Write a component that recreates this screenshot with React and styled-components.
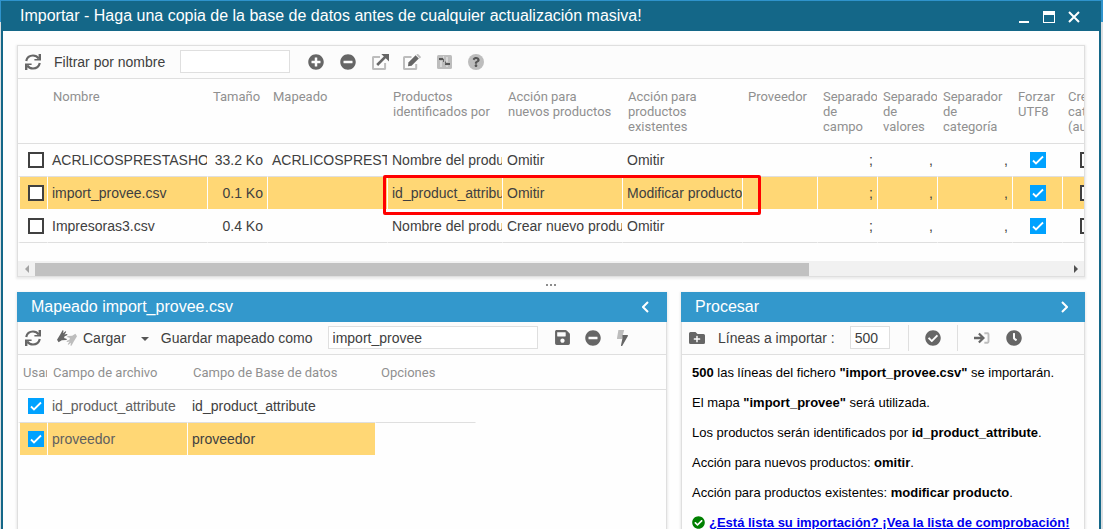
import React, { useState } from 'react';
import styled, { createGlobalStyle, css } from 'styled-components';
import {
    FaPlusCircle,
    FaMinusCircle,
    FaQuestion,
    FaCheckCircle,
    FaClock,
    FaFolderPlus,
    FaSave,
} from 'react-icons/fa';

const fileColumns = [
    { label: '', width: 30 },
    { label: 'Nombre', width: 160 },
    { label: 'Tamaño', width: 60 },
    { label: 'Mapeado', width: 120 },
    { label: 'Productos identificados por', width: 115 },
    { label: 'Acción para nuevos productos', width: 120 },
    { label: 'Acción para productos existentes', width: 120 },
    { label: 'Proveedor', width: 75 },
    { label: 'Separador de campo', width: 60 },
    { label: 'Separador de valores', width: 60 },
    { label: 'Separador de categoría', width: 75 },
    { label: 'Forzar UTF8', width: 50 },
    { label: 'Crear categorías (auto)', width: 50 },
];

const files = [
    {
        name: 'ACRLICOSPRESTASHOP',
        size: '33.2 Ko',
        map: 'ACRLICOSPRESTA',
        idBy: 'Nombre del producto',
        onNew: 'Omitir',
        onExisting: 'Omitir',
    },
    {
        name: 'import_provee.csv',
        size: '0.1 Ko',
        map: '',
        idBy: 'id_product_attribute',
        onNew: 'Omitir',
        onExisting: 'Modificar producto',
    },
    {
        name: 'Impresoras3.csv',
        size: '0.4 Ko',
        map: '',
        idBy: 'Nombre del producto',
        onNew: 'Crear nuevo producto',
        onExisting: 'Omitir',
    },
];

const mapColumns = [
    { label: 'Usar', width: 30 },
    { label: 'Campo de archivo', width: 140 },
    { label: 'Campo de Base de datos', width: 188 },
    { label: 'Opciones', width: 100 },
];

const mappings = ['id_product_attribute', 'proveedor'];

export default function App() {
    const [selected, setSelected] = useState('import_provee.csv');
    const [mapName, setMapName] = useState('import_provee');
    const [lines, setLines] = useState('500');

    return (
        <Page>
            <GlobalStyle />
            <Window>
                <TitleBar>
                    <Title>Importar - Haga una copia de la base de datos antes de cualquier actualización masiva!</Title>
                    <WindowButtons />
                </TitleBar>
                <Content>
                    <Panel>
                        <Toolbar>
                            <IconButton aria-label="Refrescar">
                                <RefreshIcon />
                            </IconButton>
                            <FilterLabel htmlFor="filter">Filtrar por nombre</FilterLabel>
                            <TextInput id="filter" $width={110} />
                            <ButtonGroup>
                                <IconButton aria-label="Añadir">
                                    <FaPlusCircle size={16} />
                                </IconButton>
                                <IconButton aria-label="Eliminar">
                                    <FaMinusCircle size={16} />
                                </IconButton>
                                <IconButton aria-label="Abrir">
                                    <ExternalIcon />
                                </IconButton>
                                <IconButton aria-label="Editar">
                                    <EditIcon />
                                </IconButton>
                                <IconButton aria-label="Opciones">
                                    <SlidersIcon />
                                </IconButton>
                                <IconButton aria-label="Ayuda">
                                    <HelpIcon />
                                </IconButton>
                            </ButtonGroup>
                        </Toolbar>
                        <GridBox>
                            <Table $width={1095}>
                                <Columns columns={fileColumns} />
                                <thead>
                                    <tr>
                                        {fileColumns.map((col) => (
                                            <HeadCell key={col.label} $height={65}>
                                                {col.label}
                                            </HeadCell>
                                        ))}
                                    </tr>
                                </thead>
                                <tbody>
                                    {files.map((file) => (
                                        <Row
                                            key={file.name}
                                            $selected={file.name === selected}
                                            onClick={() => setSelected(file.name)}
                                        >
                                            <CheckCell>
                                                <Checkbox aria-label={file.name} />
                                            </CheckCell>
                                            <Cell>{file.name}</Cell>
                                            <Cell $align="right">{file.size}</Cell>
                                            <Cell>{file.map}</Cell>
                                            <Cell>{file.idBy}</Cell>
                                            <Cell>{file.onNew}</Cell>
                                            <Cell>{file.onExisting}</Cell>
                                            <Cell />
                                            <Cell $align="right">;</Cell>
                                            <Cell $align="right">,</Cell>
                                            <Cell $align="right">,</Cell>
                                            <CheckCell $align="center">
                                                <Checkbox aria-label="Forzar UTF8" defaultChecked />
                                            </CheckCell>
                                            <CheckCell $align="center">
                                                <Checkbox aria-label="Crear categorías" />
                                            </CheckCell>
                                        </Row>
                                    ))}
                                </tbody>
                            </Table>
                            <Highlight />
                        </GridBox>
                        <ScrollBar>
                            <ScrollArrow $left />
                            <ScrollTrack>
                                <ScrollThumb />
                            </ScrollTrack>
                            <ScrollArrow />
                        </ScrollBar>
                    </Panel>

                    <Splitter>
                        <Dot />
                        <Dot />
                        <Dot />
                    </Splitter>

                    <Bottom>
                        <Panel $open>
                            <PanelHeader>
                                <PanelTitle>Mapeado import_provee.csv</PanelTitle>
                                <Chevron $left />
                            </PanelHeader>
                            <Toolbar>
                                <IconButton aria-label="Refrescar">
                                    <RefreshIcon />
                                </IconButton>
                                <LoadButton>
                                    <HandsIcon />
                                    Cargar
                                    <Caret />
                                </LoadButton>
                                <SaveLabel htmlFor="map-name">Guardar mapeado como</SaveLabel>
                                <TextInput
                                    id="map-name"
                                    $width={210}
                                    value={mapName}
                                    onChange={(e) => setMapName(e.target.value)}
                                />
                                <ButtonGroup $tight>
                                    <IconButton aria-label="Guardar">
                                        <FaSave size={17} />
                                    </IconButton>
                                    <IconButton aria-label="Eliminar">
                                        <FaMinusCircle size={16} />
                                    </IconButton>
                                    <IconButton aria-label="Automático">
                                        <BoltIcon />
                                    </IconButton>
                                </ButtonGroup>
                            </Toolbar>
                            <HeadLine>
                                <Table $width={458}>
                                    <Columns columns={mapColumns} />
                                    <thead>
                                        <tr>
                                            {mapColumns.map((col) => (
                                                <HeadCell key={col.label} $height={35}>
                                                    {col.label}
                                                </HeadCell>
                                            ))}
                                        </tr>
                                    </thead>
                                    <tbody>
                                        {mappings.map((field) => (
                                            <Row key={field} $selected={field === 'proveedor'}>
                                                <CheckCell>
                                                    <Checkbox aria-label={field} defaultChecked />
                                                </CheckCell>
                                                <Cell $muted>{field}</Cell>
                                                <Cell>{field}</Cell>
                                                <Cell />
                                            </Row>
                                        ))}
                                    </tbody>
                                </Table>
                            </HeadLine>
                        </Panel>

                        <Panel $open>
                            <PanelHeader>
                                <PanelTitle>Procesar</PanelTitle>
                                <Chevron />
                            </PanelHeader>
                            <Toolbar>
                                <IconButton aria-label="Nueva carpeta">
                                    <FaFolderPlus size={16} />
                                </IconButton>
                                <LinesLabel htmlFor="lines">Líneas a importar :</LinesLabel>
                                <TextInput
                                    id="lines"
                                    $width={40}
                                    value={lines}
                                    onChange={(e) => setLines(e.target.value)}
                                />
                                <Separator />
                                <IconButton aria-label="Comprobar">
                                    <FaCheckCircle size={16} />
                                </IconButton>
                                <Separator $tight />
                                <IconButton aria-label="Importar">
                                    <ImportIcon />
                                </IconButton>
                                <IconButton aria-label="Programar">
                                    <FaClock size={16} />
                                </IconButton>
                            </Toolbar>
                            <Summary>
                                <p>
                                    <b>500</b> las líneas del fichero <b>"import_provee.csv"</b> se importarán.
                                </p>
                                <p>
                                    El mapa <b>"import_provee"</b> será utilizada.
                                </p>
                                <p>
                                    Los productos serán identificados por <b>id_product_attribute</b>.
                                </p>
                                <p>
                                    Acción para nuevos productos: <b>omitir</b>.
                                </p>
                                <p>
                                    Acción para productos existentes: <b>modificar producto</b>.
                                </p>
                                <CheckLine>
                                    <FaCheckCircle size={13} />
                                    <a href="#checklist">¿Está lista su importación? ¡Vea la lista de comprobación!</a>
                                </CheckLine>
                            </Summary>
                        </Panel>
                    </Bottom>
                </Content>
            </Window>
        </Page>
    );
}

function Columns({ columns }) {
    return (
        <colgroup>
            {columns.map((col) => (
                <col key={col.label} style={{ width: col.width }} />
            ))}
        </colgroup>
    );
}

function WindowButtons() {
    return (
        <WindowControls>
            <WindowButton aria-label="Minimizar">
                <svg width="12" height="12" viewBox="0 0 12 12">
                    <path d="M1 10h10v2H1z" fill="#fff" />
                </svg>
            </WindowButton>
            <WindowButton aria-label="Maximizar">
                <svg width="12" height="12" viewBox="0 0 12 12">
                    <path d="M0 0h12v12H0zM1 4v7h10V4z" fill="#fff" fillRule="evenodd" />
                </svg>
            </WindowButton>
            <WindowButton aria-label="Cerrar">
                <svg width="12" height="12" viewBox="0 0 12 12">
                    <path d="M1 1l10 10M11 1L1 11" stroke="#fff" strokeWidth="2" />
                </svg>
            </WindowButton>
        </WindowControls>
    );
}

function RefreshIcon() {
    return (
        <svg width="16" height="16" viewBox="0 0 16 16" fill="none" stroke="#666" strokeWidth="2.2">
            <path d="M1.2 7C2 3.6 4.8 1.5 8 1.5c2.4 0 4.4 1 5.8 3" />
            <path d="M14.8 9c-.8 3.4-3.6 5.5-6.8 5.5-2.4 0-4.4-1-5.8-3" />
            <path d="M16 0v6.6H9.4V5h4.2V0zM0 16V9.4h6.600V11H2.400v5z" fill="#666" stroke="none" />
        </svg>
    );
}

function ExternalIcon() {
    return (
        <svg width="17" height="16" viewBox="0 0 17 16" fill="none">
            <path d="M8 3H1.5A.6.6 0 0 0 1 3.4v11c0 .3.2.6.5.6h11c.3 0 .6-.3.6-.6V9" stroke="#bdbdbd" strokeWidth="2" />
            <path d="M5.2 11L14 2.2" stroke="#666" strokeWidth="2.6" />
            <path d="M9.3 0H17v7.6l-2-2L11.3 2z" fill="#666" />
        </svg>
    );
}

function EditIcon() {
    return (
        <svg width="18" height="16" viewBox="0 0 18 16" fill="none">
            <path d="M8.5 3H1.6a.6.6 0 0 0-.6.6v10.8c0 .3.3.6.6.6h11c.3 0 .6-.3.6-.6V10" stroke="#bdbdbd" strokeWidth="2" />
            <path d="M5 12.2l.4-3.8 7.2-7.1 3.2 3.2-7.2 7.2z" fill="#666" />
            <path d="M13.3.8l.8-.6c.4-.3.9-.3 1.2 0l2.3 2.300c.4.4.4.9 0 1.200l-.9.7z" fill="#bdbdbd" />
        </svg>
    );
}

function SlidersIcon() {
    return (
        <svg width="15" height="14" viewBox="0 0 15 14">
            <rect width="15" height="14" rx="1.5" fill="#bdbdbd" />
            <path d="M4 6v6M6 2h1M10 2v5M10 10.500v1.500" fill="none" stroke="#f2f2f2" />
            <path d="M2 4h4M8 9h5" fill="none" stroke="#555" strokeWidth="2" />
            <path d="M6.500 4v3M8.500 6.500V9" fill="none" stroke="#666" />
        </svg>
    );
}

function HelpIcon() {
    return (
        <svg width="16" height="16" viewBox="0 0 16 16">
            <circle cx="8" cy="8" r="8" fill="#bdbdbd" />
            <FaQuestion x={3} y={3} size={10} color="#555" />
        </svg>
    );
}

// two signing hands, the light one is the dark one turned around
function HandsIcon() {
    const hand =
        'M0 9.800L3.200 4.600 5.400.500c.4-.6 1.300-.2 1.100.5L6 3.200 8.200 1.400c.6-.4 1.300.300.8.9L7.400 4.600l2.300-.5c.8-.1 1 .9.300 1.200L7.800 6.200c-.8.600-.9 1.600-.2 2.100l1.700.4c.8.200.7 1.300-.1 1.300l-4.400.3-3.200 2z';

    return (
        <svg width="20" height="16" viewBox="0 0 20 16">
            <path d={hand} fill="#666" />
            <path d={hand} fill="#bdbdbd" transform="rotate(180 10 8)" />
        </svg>
    );
}

function BoltIcon() {
    return (
        <svg width="11" height="16" viewBox="0 0 11 16">
            <path d="M1.4 0h5.8L5.9 4.8 4.9 9H.6A.6.6 0 0 1 0 8.3z" fill="#bdbdbd" />
            <path d="M5.4 5h5c.5 0 .7.5.5.9L5.3 15.7c-.4.6-1.5.2-1.3-.4L5.3 9z" fill="#666" />
        </svg>
    );
}

function ImportIcon() {
    return (
        <svg width="16" height="14" viewBox="0 0 17 14" fill="none">
            <path d="M11 2h3.500c.5 0 .9.4.9.9v8.200c0 .5-.4.9-.9.9H11" stroke="#bdbdbd" strokeWidth="2" />
            <path d="M0 7h9.5M5.2 2.200L10 7l-4.800 4.800" stroke="#666" strokeWidth="2.400" />
        </svg>
    );
}

function Caret() {
    return (
        <CaretSvg width="8" height="4" viewBox="0 0 8 4">
            <path d="M0 0h8L4 4z" fill="#555" />
        </CaretSvg>
    );
}

function Chevron({ $left }) {
    return (
        <ChevronButton aria-label={$left ? 'Contraer' : 'Expandir'}>
            <svg width="8" height="12" viewBox="0 0 8 12" fill="none" stroke="#fff" strokeWidth="2">
                <path d={$left ? 'M6 1L1 6l5 5' : 'M2 1l5 5-5 5'} />
            </svg>
        </ChevronButton>
    );
}

function ScrollArrow({ $left }) {
    return (
        <ArrowButton aria-label={$left ? 'Desplazar a la izquierda' : 'Desplazar a la derecha'}>
            <svg width="4" height="8" viewBox="0 0 4 8">
                <path d={$left ? 'M4 0v8L0 4z' : 'M0 0v8l4-4z'} fill={$left ? '#a3a3a3' : '#505050'} />
            </svg>
        </ArrowButton>
    );
}

const GlobalStyle = createGlobalStyle`
    * {
        box-sizing: border-box;
    }

    body {
        margin: 0;
        font-family: 'Liberation Sans', Arial, sans-serif;
        font-size: 14px;
        color: #404040;
    }

    button {
        padding: 0;
        border: 0;
        background: none;
        font: inherit;
        color: inherit;
        cursor: pointer;
    }
`;

const Page = styled.div`
    height: 100vh;
    padding: 1px 2px 0 1px;
    overflow: hidden;
    background: linear-gradient(#2f93cc 22px, #dcdfe1 22px);
`;

const Window = styled.div`
    display: flex;
    flex-direction: column;
    height: 100%;
    border: solid #146788;
    border-width: 0 2px;
    background-color: #fefefe;
`;

const TitleBar = styled.div`
    flex: none;
    display: flex;
    justify-content: space-between;
    align-items: center;
    height: 30px;
    padding: 0 19px 0 17px;
    background-color: #146788;
    color: #fff;
`;

const Title = styled.h1`
    margin: 0;
    font-size: 16px;
    font-weight: normal;
    line-height: 30px;
`;

const WindowControls = styled.div`
    display: flex;
    gap: 13px;
    padding-top: 2px;
`;

const WindowButton = styled.button`
    display: flex;
`;

const Content = styled.div`
    flex: 1;
    min-height: 0;
    display: flex;
    flex-direction: column;
    padding: 14px 14px 0;
`;

const Panel = styled.section`
    min-width: 0;
    border: 1px solid #dfdfdf;
    background-color: #fefefe;
    box-shadow: 0 1px 2px 1px rgba(0, 0, 0, 0.08);
    ${(props) =>
        props.$open &&
        css`
            border-top: 0;
            border-bottom: 0;
        `}
`;

const PanelHeader = styled.header`
    display: flex;
    justify-content: space-between;
    align-items: center;
    height: 30px;
    margin: 0 -1px;
    padding: 0 17px 0 14px;
    background-color: #3398cc;
    color: #fff;
`;

const PanelTitle = styled.h2`
    margin: 0;
    font-size: 16px;
    font-weight: normal;
`;

const ChevronButton = styled.button`
    display: flex;
`;

const Toolbar = styled.div`
    display: flex;
    align-items: center;
    height: 33px;
    padding: 0 7px 1px;
    border-bottom: 1px solid #dfdfdf;
    background-color: #fcfcfc;
    white-space: nowrap;
`;

const IconButton = styled.button`
    flex: none;
    display: flex;
    justify-content: center;
    align-items: center;
    min-width: 16px;
    color: #666;

    & + & {
        margin-left: 16px;
    }
`;

const ButtonGroup = styled.div`
    display: flex;
    margin-left: 10px;

    ${IconButton} {
        width: ${(props) => (props.$tight ? 30 : 32)}px;
        margin: 0;
    }
`;

const FilterLabel = styled.label`
    margin: 0 15px 0 13px;
`;

const SaveLabel = styled.label`
    margin: 0 15px 0 12px;
`;

const LinesLabel = styled.label`
    margin: 0 15px 0 13px;
`;

const TextInput = styled.input`
    width: ${(props) => props.$width}px;
    height: 23px;
    padding: 0 4px;
    border: 1px solid #dfdfdf;
    background-color: #fff;
    font: inherit;
    color: inherit;
    outline: none;
`;

const LoadButton = styled.button`
    display: flex;
    align-items: center;
    gap: 6px;
    margin-left: 16px;
`;

const CaretSvg = styled.svg`
    margin: 2px 0 0 9px;
`;

const Separator = styled.span`
    width: 1px;
    height: 26px;
    margin: 0 16px 0 ${(props) => (props.$tight ? 16 : 18)}px;
    background-color: #dfdfdf;
`;

const GridBox = styled.div`
    position: relative;
    overflow: hidden;
    padding-bottom: 18px;

    /* header rule runs to the edge of the panel */
    background: linear-gradient(#dfdfdf, #dfdfdf) 0 64px / 100% 1px no-repeat;
`;

const HeadLine = styled.div`
    overflow: hidden;
    background: linear-gradient(#dfdfdf, #dfdfdf) 0 34px / 100% 1px no-repeat;
`;

const Table = styled.table`
    width: ${(props) => props.$width}px;
    table-layout: fixed;
    border-collapse: separate;
    border-spacing: 0;
`;

const HeadCell = styled.th`
    height: ${(props) => props.$height}px;
    padding: 10px 5px 0;
    overflow: hidden;
    font-family: Roboto, sans-serif;
    font-size: 13px;
    font-weight: normal;
    line-height: 15px;
    text-align: left;
    vertical-align: top;
    color: #909090;
    border-right: 1px solid transparent;
`;

const Cell = styled.td`
    height: 33px;
    padding: 0 4px;
    overflow: hidden;
    border-right: 1px solid #fefefe;
    border-bottom: 1px solid #dfdfdf;
    text-align: ${(props) => props.$align || 'left'};
    white-space: nowrap;
    color: ${(props) => (props.$muted ? '#606060' : 'inherit')};
`;

const CheckCell = styled(Cell)`
    padding: ${(props) => (props.$align ? '0' : '0 0 0 8px')};
    line-height: 0;
`;

const Row = styled.tr`
    ${(props) =>
        props.$selected &&
        css`
            ${Cell} {
                background-color: #ffd775;
                background-clip: padding-box;
                border-bottom-color: #fefefe;
            }
        `}

    ${Cell}:first-child {
        border-left: 2px solid #fefefe;
    }

    /* the options column keeps a plain background */
    ${Cell}:nth-child(4):last-child {
        background: none;
    }
`;

const Checkbox = styled.input.attrs({ type: 'checkbox' })`
    appearance: none;
    display: inline-block;
    width: 16px;
    height: 16px;
    margin: 0;
    border: 2px solid #404040;
    background-color: #fff;
    vertical-align: middle;

    &:checked {
        border-color: #00a2ff;
        background: #00a2ff
            url("data:image/svg+xml,%3Csvg xmlns='http://www.w3.org/2000/svg' viewBox='0 0 12 12'%3E%3Cpath d='M1 6.5l3 3 7-7' fill='none' stroke='white' stroke-width='1.8'/%3E%3C/svg%3E")
            center / 12px no-repeat;
    }
`;

const Highlight = styled.div`
    position: absolute;
    left: 365px;
    top: 96px;
    width: 378px;
    height: 40px;
    border: 3px solid #f00;
    border-radius: 2px;
    pointer-events: none;
`;

const ScrollBar = styled.div`
    display: flex;
    height: 15px;
    background-color: #f1f1f1;
`;

const ArrowButton = styled.button`
    display: flex;
    justify-content: center;
    align-items: center;
    width: 17px;
`;

const ScrollTrack = styled.div`
    flex: 1;
    padding-top: 2px;
`;

const ScrollThumb = styled.div`
    width: 75%;
    height: 13px;
    background-color: #c1c1c1;
`;

const Splitter = styled.div`
    flex: none;
    display: flex;
    justify-content: center;
    align-items: center;
    gap: 2px;
    height: 15px;
`;

const Dot = styled.span`
    width: 2px;
    height: 2px;
    background-color: #8c8c8c;
`;

const Bottom = styled.div`
    flex: 1;
    min-height: 0;
    display: grid;
    grid-template-columns: minmax(0, 650fr) minmax(0, 404fr);
    gap: 14px;
`;

const Summary = styled.div`
    padding: 10px 10px 0;
    font-size: 13px;
    line-height: 15px;
    color: #000;
    white-space: nowrap;

    p {
        margin: 0 0 15px;
    }
`;

const CheckLine = styled.div`
    display: flex;
    align-items: center;
    gap: 4px;
    font-weight: bold;
    color: #008000;

    a {
        color: #0000ee;
    }
`;
